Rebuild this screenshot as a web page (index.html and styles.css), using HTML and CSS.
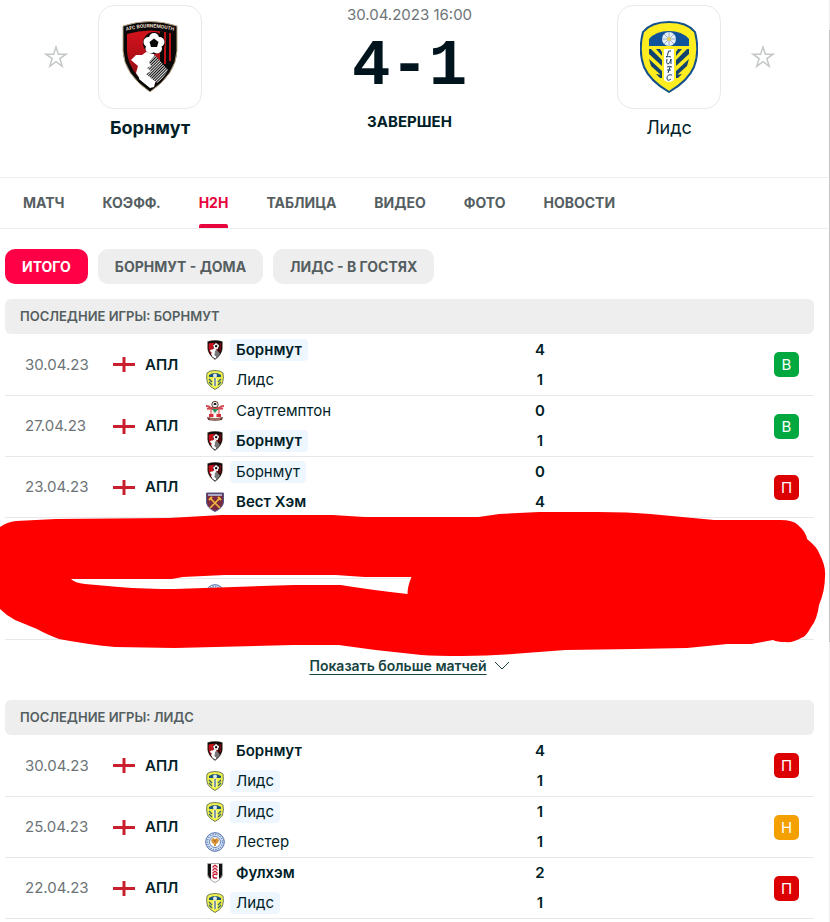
FILE: index.html
```
<!DOCTYPE html>
<html lang="ru">
<head>
<meta charset="utf-8">
<title>Борнмут - Лидс</title>
<link rel="stylesheet" href="styles.css">
</head>
<body>
<svg class="defs" aria-hidden="true">
  <defs>
    <linearGradient id="red" x1="0" y1="0" x2="0" y2="1"><stop offset="0" stop-color="#d4121c"/><stop offset="1" stop-color="#8a0c14"/></linearGradient>
    <pattern id="hatch" width="2" height="2" patternUnits="userSpaceOnUse" patternTransform="rotate(45)"><rect width="2" height="2" fill="#111"/><rect width="1" height="2" fill="#ddd"/></pattern>
    <symbol id="bou" viewBox="0 0 56 72">
      <path d="M1 5Q28-4 55 5V30Q54 53 28 71Q2 53 1 30Z" fill="#0b0808" stroke="#b9a888" stroke-width="1"/>
      <path d="M5 13Q28 6 51 13V30Q50 50 28 66Q6 50 5 30Z" fill="url(#red)"/>
      <path d="M38 10L52 13V30Q51 41 45 50L38 42Z" fill="#0b0808"/>
      <path d="M43 11v32M48 12v28" stroke="#c01119" stroke-width="2"/>
      <path d="M9 39L14 34L20 34L24 31L31 32L34 37L29 44L28 48L31 50L27 54L30 57L24 58L28 66Q19 61 14 52L16 45Z" fill="#fff"/>
      <path d="M22 38L34 35L35 55L32 66L28 67L17 58Z" fill="#fff"/>
      <path d="M33 34L46 49Q42 57 35 62L24 53L29 50L25 47L29 45L27 41Z" fill="url(#hatch)"/>
      <circle cx="32" cy="22" r="11" fill="#0b0808"/>
      <g fill="#fff"><circle cx="32" cy="17" r="5"/><circle cx="37.500" cy="21" r="5"/><circle cx="35" cy="27.500" r="5"/><circle cx="28.500" cy="27.500" r="5"/><circle cx="26.500" cy="21" r="5"/></g>
      <path d="M32 17.500L36.500 21L35 26H29L27.500 21Z" fill="#0b0808"/>
    </symbol>
    <symbol id="lee" viewBox="0 0 58 72">
      <path d="M29 1Q47 1 55 11Q60 30 54 46Q48 60 29 71Q10 60 4 46Q-2 30 3 11Q11 1 29 1Z" fill="#ffed1f" stroke="#15518c" stroke-width="2"/>
      <path d="M9 25V18Q16 10 29 10T49 18V25Z" fill="#10539a"/>
      <g fill="#10436f"><path d="M9 28h2L22 39V45L9 33ZM9 38L22 50V55L11 45ZM16 28h4l2 3v4ZM16 53l6 1v3h-2Z"/><path d="M49 28h-2L36 39V45L49 33ZM49 38L36 50V55L47 45ZM42 28h-4l-2 3v4ZM42 53l-6 1v3h2Z"/></g>
      <path d="M24 28H34V59Q29 63 24 59Z" fill="#fff"/>
      <circle cx="29" cy="18" r="7" fill="#e9eff6"/>
      <path d="M29 11v14M22 18h14M24 13l10 10M34 13L24 23" stroke="#8fb0cf" stroke-width="1"/>
      <circle cx="29" cy="18" r="2" fill="#e5c94c"/>
      <path d="M31 30q-3-1-3 2t-2 4q3-1 5 0M27 38q-1 5 1 5t3-5v5M32 46q-3-1-5 0m3 0l-2 6m-1-3h4M32 54q-5-1-5 3t4 1" fill="none" stroke="#183e6a" stroke-width="1"/>
    </symbol>
    <symbol id="lee-small" viewBox="0 0 18 20">
      <path d="M9 .5Q15 .5 17 3Q18 8 16.500 13Q14 17 9 19.500Q4 17 1.500 13Q0 8 1 3Q3 .5 9 .5Z" fill="#eff04a" stroke="#73805a"/>
      <path d="M3 7V5Q9 1 15 5V7Z" fill="#19537d"/><circle cx="9" cy="5.500" r="2" fill="#dbe8f0"/>
      <path d="M7.500 8h3v8h-3z" fill="#fff"/><path d="M9 8v8M3 9l3 3M3 12l3 3M15 9l-3 3M15 12l-3 3" stroke="#315d6b" stroke-width="1.200"/>
    </symbol>
    <symbol id="sou" viewBox="0 0 20 20">
      <path d="M5 8h10v6q-5 4-10 0Z" fill="#f4e9e2"/>
      <path d="M1 5q3 0 5 2h8q2-2 5-2M2 8q3-1 5 0h6q2-1 5 0" fill="none" stroke="#cf4a52" stroke-width="1.800"/>
      <circle cx="10" cy="3.500" r="3.200" fill="#eee" stroke="#5a3a2c"/><path d="M9 2h2l.5 2H8.500z" fill="#222"/>
      <path d="M6 9v5M14 9v5" stroke="#e8a0a0" stroke-width="2"/><path d="M4 13h12v3H4z" fill="#d62b38"/><path d="M8.500 13h3v3h-3z" fill="#fff"/>
      <path d="M7 8h6l-3 4Z" fill="#1b9960"/><path d="M2 16q8 2 16 0l-1 3q-7 1.500-14 0Z" fill="#6d3932"/><path d="M5 18h10" stroke="#cfa18b"/>
    </symbol>
    <symbol id="whu" viewBox="0 0 20 20">
      <path d="M1.500 1H18.500V10Q18 16 10 19.500Q2 16 1.500 10Z" fill="#7b2a42" stroke="#4c5b8c"/>
      <path d="M3 2h14v2H3z" fill="#a9aac5"/><path d="M6 7l9 9M14 7l-9 9" stroke="#f0b63b" stroke-width="1.700"/><path d="M4 8l3-3M13 5l3 3" stroke="#f0b63b" stroke-width="2.200"/>
    </symbol>
    <symbol id="lei" viewBox="0 0 20 20">
      <circle cx="10" cy="10" r="9.300" fill="#e5edf8" stroke="#4567a8"/><circle cx="10" cy="10" r="7.500" fill="none" stroke="#6f8fc5" stroke-width="1.500" stroke-dasharray="1.500 1"/>
      <circle cx="10" cy="10" r="5.500" fill="#fff" stroke="#6585bb"/><path d="M6 8l2-2 2 1 2-1 2 2-1 3-2 1v2H9v-2l-2-1Z" fill="#d99435"/><circle cx="10" cy="9" r="1" fill="#a96b34"/>
    </symbol>
    <symbol id="ful" viewBox="0 0 16 20">
      <path d="M.5.5H15.500V12Q15 16 8 19.500Q1 16 .5 12Z" fill="#fff" stroke="#aaa"/><path d="M1 1h3v15q-3-2-3-4ZM12 1h3v11q0 2-3 4Z" fill="#111"/>
      <path d="M8 2L5.500 4.500M8 2l2.500 2.500M8 5L5.500 7.500M8 5l2.500 2.500M8 8l-2.500 2.500M8 8l2.500 2.500" stroke="#c71c32" stroke-width="1.300"/><path d="M10.500 11.500Q6 10.500 6 13t4 2" fill="none" stroke="#c71c32" stroke-width="1.500"/>
    </symbol>
    <symbol id="eng" viewBox="0 0 22 15"><path d="M0 7.500H22M11 0V15" stroke="#c9202d" stroke-width="3"/></symbol>
    <symbol id="star" viewBox="0 0 24 24"><path d="M12 2L14.400 9.200H22L15.900 13.600L18.200 21.300L12 16.700L5.800 21.300L8.100 13.600L2 9.200H9.600Z" fill="none" stroke="#c3c7c8" stroke-width="1.500"/></symbol>
  </defs>
</svg>
<div class="page">
  <header class="duel">
    <div class="side">
      <button class="fav" type="button" aria-label="Борнмут"><svg><use href="#star"/></svg></button>
      <div class="club"><div class="badge"><svg viewBox="0 0 56 72"><use href="#bou"/><path id="arc" d="M4 10Q28 3 52 10" fill="none"/><text class="crest-text"><textPath href="#arc" startOffset="50%">AFC BOURNEMOUTH</textPath></text></svg></div><a class="club-name winner" href="#">Борнмут</a></div>
    </div>
    <div class="result">
      <time class="start">30.04.2023 16:00</time>
      <div class="score"><span>4</span><span>-</span><span>1</span></div>
      <div class="status">ЗАВЕРШЕН</div>
    </div>
    <div class="side away">
      <div class="club"><div class="badge"><svg><use href="#lee"/></svg></div><a class="club-name" href="#">Лидс</a></div>
      <button class="fav" type="button" aria-label="Лидс"><svg><use href="#star"/></svg></button>
    </div>
  </header>
  <nav class="tabs">
    <a href="#">МАТЧ</a><a href="#">КОЭФФ.</a><a class="active" href="#">H2H</a><a href="#">ТАБЛИЦА</a><a href="#">ВИДЕО</a><a href="#">ФОТО</a><a href="#">НОВОСТИ</a>
  </nav>
  <main class="content">
    <div class="filters">
      <button class="on" type="button">ИТОГО</button><button type="button">БОРНМУТ - ДОМА</button><button type="button">ЛИДС - В ГОСТЯХ</button>
    </div>
    <section>
      <h2>ПОСЛЕДНИЕ ИГРЫ: БОРНМУТ</h2>
      <div class="covered">
      <table>
        <tr><td class="date">30.04.23</td><td class="league"><div><svg><use href="#eng"/></svg>АПЛ</div></td>
          <td class="teams"><div><svg><use href="#bou"/></svg><b class="own">Борнмут</b></div><div><svg><use href="#lee-small"/></svg><span>Лидс</span></div></td>
          <td class="goals"><div>4</div><div>1</div></td><td class="form"><span class="win">В</span></td></tr>
        <tr><td class="date">27.04.23</td><td class="league"><div><svg><use href="#eng"/></svg>АПЛ</div></td>
          <td class="teams"><div><svg><use href="#sou"/></svg><span>Саутгемптон</span></div><div><svg><use href="#bou"/></svg><b class="own">Борнмут</b></div></td>
          <td class="goals"><div>0</div><div>1</div></td><td class="form"><span class="win">В</span></td></tr>
        <tr><td class="date">23.04.23</td><td class="league"><div><svg><use href="#eng"/></svg>АПЛ</div></td>
          <td class="teams"><div><svg><use href="#bou"/></svg><span class="own">Борнмут</span></div><div><svg><use href="#whu"/></svg><b>Вест Хэм</b></div></td>
          <td class="goals"><div>0</div><div>4</div></td><td class="form"><span class="loss">П</span></td></tr>
        <tr><td></td><td></td><td class="teams"></td><td></td><td></td></tr>
        <tr><td></td><td></td><td class="teams"><div><svg><use href="#lei"/></svg></div><div></div></td><td></td><td></td></tr>
      </table>
      <svg class="marker" viewBox="0 510 830 150" preserveAspectRatio="none" aria-hidden="true"><path fill="#f00" fill-rule="evenodd" d="M0 527Q7 522 16 521L56 519L169 518L222 515H333L365 517H479L500 514Q520 513 540 512H598Q630 512 651 514L683 517L715 520H781Q794 520 799 525Q807 532 808 539Q818 547 820 553Q827 566 826 576Q826 591 820 605Q818 620 812 627Q807 637 802 638Q794 643 786 642Q778 642 774 640L752 644H728L688 648L635 649L566 650L513 654Q488 656 463 656Q436 656 422 655L376 650L339 645H294L175 648L115 647Q85 644 59 639Q46 634 37 629L15 620Q7 616 0 609ZM71 579Q75 583 85 584L119 587Q145 589 175 589L294 585H341Q372 590 408 594Q408 586 412 577H365L336 575H225L183 577L172 579Z"/></svg>
      </div>
      <a class="more" href="#"><span>Показать больше матчей</span><svg viewBox="0 0 16 10"><path d="M1 1L8 8L15 1" fill="none" stroke="#17443f" stroke-width="1"/></svg></a>
    </section>
    <section>
      <h2>ПОСЛЕДНИЕ ИГРЫ: ЛИДС</h2>
      <table>
        <tr><td class="date">30.04.23</td><td class="league"><div><svg><use href="#eng"/></svg>АПЛ</div></td>
          <td class="teams"><div><svg><use href="#bou"/></svg><b>Борнмут</b></div><div><svg><use href="#lee-small"/></svg><span class="own">Лидс</span></div></td>
          <td class="goals"><div>4</div><div>1</div></td><td class="form"><span class="loss">П</span></td></tr>
        <tr><td class="date">25.04.23</td><td class="league"><div><svg><use href="#eng"/></svg>АПЛ</div></td>
          <td class="teams"><div><svg><use href="#lee-small"/></svg><span class="own">Лидс</span></div><div><svg><use href="#lei"/></svg><span>Лестер</span></div></td>
          <td class="goals"><div>1</div><div>1</div></td><td class="form"><span class="draw">Н</span></td></tr>
        <tr><td class="date">22.04.23</td><td class="league"><div><svg><use href="#eng"/></svg>АПЛ</div></td>
          <td class="teams"><div><svg><use href="#ful"/></svg><b>Фулхэм</b></div><div><svg><use href="#lee-small"/></svg><span class="own">Лидс</span></div></td>
          <td class="goals"><div>2</div><div>1</div></td><td class="form"><span class="loss">П</span></td></tr>
      </table>
    </section>
  </main>
</div>
</body>
</html>
```

FILE: styles.css
```
* { box-sizing: border-box; }
body { margin: 0; background: #fff; color: #001e28; font: 14px/20px Inter, "Noto Sans", sans-serif; overflow-x: hidden; }
a { color: inherit; text-decoration: none; }
button { border: 0; font: inherit; color: inherit; padding: 0; background: none; }
.defs { position: absolute; width: 0; height: 0; }
.page { min-height: 100vh; padding-right: 1px; background: linear-gradient(#eee 30px, #c4c4c4 30px 642px, #eee 642px) right top / 1px 100% no-repeat; }

.duel { display: grid; grid-template-columns: 1fr 1fr 1fr; padding: 5px 54px 0 44px; height: 177px; }
.side { display: flex; align-items: flex-start; gap: 30px; }
.away { justify-content: flex-end; }
.fav { width: 24px; height: 24px; margin-top: 40px; }
.fav svg { display: block; width: 24px; height: 24px; }
.club { width: 104px; display: flex; flex-direction: column; align-items: center; gap: 8px; }
.badge { width: 104px; height: 104px; border: 1px solid #e9e9e9; border-radius: 16px; display: flex; align-items: center; justify-content: center; }
.badge svg { width: 58px; height: 72px; }
.crest-text { font: bold 5px Roboto, sans-serif; fill: #e8ddc8; text-anchor: middle; }
.club-name { font-size: 18px; line-height: 22px; white-space: nowrap; }
.winner { font-weight: 700; }
.result { display: flex; flex-direction: column; align-items: center; }
.start { color: #6d7478; font-size: 15px; }
.score { display: flex; margin-top: 12px; font: bold 64px/60px "Liberation Mono", monospace; color: #00141e; }
.status { margin-top: 15px; font-weight: 700; font-size: 15px; }

.tabs { display: flex; gap: 38px; padding: 0 23px; height: 52px; border-top: 1px solid #eee; border-bottom: 1px solid #eee; color: #555e61; font-weight: 700; }
.tabs a { line-height: 50px; height: 50px; }
.tabs .active { color: #e8063f; position: relative; }
.tabs .active::after { content: ""; position: absolute; left: 0; right: 0; bottom: 0; height: 4px; background: #e8063f; border-radius: 2px 2px 0 0; }

.content { padding: 20px 15px 0 5px; }
.filters { display: flex; gap: 10px; margin-bottom: 15px; }
.filters button { height: 35px; padding: 0 17px; border-radius: 10px; background: #eee; color: #555e61; font-weight: 700; white-space: nowrap; }
.filters .on { background: #ff0046; color: #fff; }
h2 { margin: 0; height: 35px; padding: 0 15px; border-radius: 6px; background: #eee; color: #555e61; font-size: 13px; line-height: 35px; font-weight: 600; }

.covered { position: relative; }
.marker { position: absolute; left: -5px; top: 176px; width: calc(100% + 20px); height: 150px; }
table { width: 100%; border-collapse: separate; border-spacing: 0; table-layout: fixed; }
tr { height: 61px; }
tr:first-child { height: 62px; }
td { padding: 0; border-bottom: 1px solid #e8e8e8; }
.date { width: 108px; padding-left: 20px; color: #6d7478; font-size: 15px; }
.league { width: 90px; font-weight: 600; font-size: 15px; }
.league div { display: flex; align-items: center; gap: 10px; }
.league svg { width: 22px; height: 15px; }
.teams div { display: flex; align-items: center; height: 30px; gap: 3px; }
.teams svg { width: 24px; height: 20px; }
.teams b, .teams span { padding: 1px 6px; border-radius: 4px; font-size: 15px; line-height: 20px; }
.teams b { font-weight: 600; }
.teams .own { background: #eef6ff; }
.goals { width: 40px; font-weight: 600; text-align: center; font-size: 15px; }
.goals div { line-height: 30px; }
.form { width: 254px; padding-right: 15px; }
.form span { display: block; margin-left: auto; width: 25px; height: 25px; border-radius: 5px; color: #fff; font-size: 15px; line-height: 25px; text-align: center; }
.win { background: #00a83f; }
.loss { background: #dc0000; }
.draw { background: #f3a000; }

.more { display: flex; justify-content: center; align-items: center; gap: 7px; height: 51px; margin-bottom: 9px; color: #17443f; font-size: 14px; font-weight: 600; }
.more span { text-decoration: underline; text-underline-offset: 3px; }
.more svg { width: 16px; height: 10px; }
```
